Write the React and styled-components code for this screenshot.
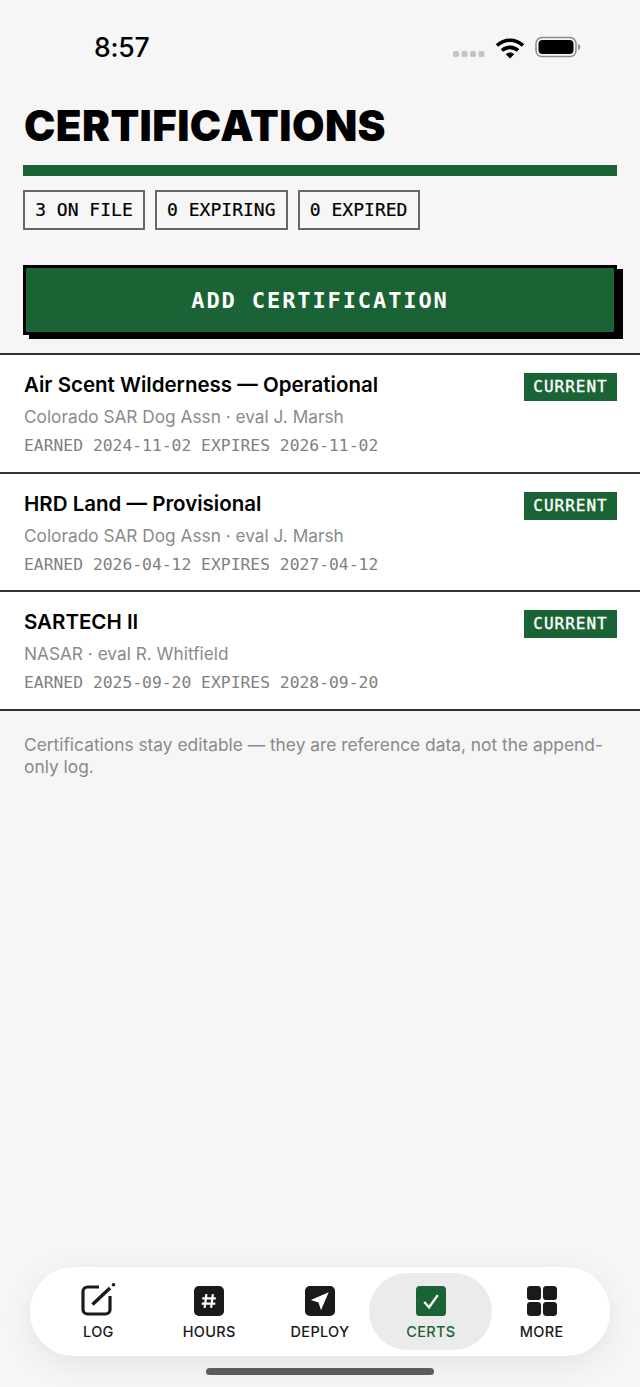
import React from 'react';
import styled, { createGlobalStyle } from 'styled-components';

const GlobalStyle = createGlobalStyle`
  html, body {
    margin: 0;
    padding: 0;
    background: #f6f6f6;
  }
  * {
    box-sizing: border-box;
  }
`;

const GREEN = '#1a6334';
const MONO = `'DejaVu Sans Mono', 'Liberation Mono', monospace`;
const SANS = `Inter, 'Liberation Sans', sans-serif`;

const Page = styled.div`
  position: relative;
  width: 640px;
  height: 1387px;
  overflow: hidden;
  background: #f6f6f6;
  font-family: ${SANS};
  color: #000;
`;

const StatusBar = styled.div`
  height: 94px;
  padding: 30px 59px 0 94px;
  display: flex;
  justify-content: space-between;
`;

const Clock = styled.div`
  font-size: 26.5px;
  line-height: 34px;
  font-weight: 500;
  letter-spacing: -0.2px;
`;

const StatusIcons = styled.div`
  display: flex;
  align-items: flex-start;
  gap: 10px;
  padding-top: 6px;
`;

const Header = styled.header`
  padding: 0 23px;
`;

const Title = styled.h1`
  margin: 0;
  height: 71px;
  padding-left: 1px;
  font-size: 42px;
  line-height: 64px;
  font-weight: 900;
  letter-spacing: 0.4px;
`;

const Rule = styled.div`
  height: 11px;
  background: ${GREEN};
`;

const Chips = styled.div`
  display: flex;
  gap: 10px;
  margin-top: 14px;
`;

const Chip = styled.div`
  height: 40px;
  padding: 0 10.2px 2px;
  display: flex;
  align-items: center;
  border: 2px solid #666;
  font-family: ${MONO};
  font-size: 18px;
  -webkit-text-stroke: 0.2px #000;
  white-space: pre;
`;

const AddButton = styled.button`
  display: block;
  width: 594px;
  height: 70px;
  margin: 35px 0 18px;
  border: 3px solid #000;
  box-shadow: 6px 4px 0 #000;
  background: ${GREEN};
  color: #fff;
  font-family: ${MONO};
  font-size: 22px;
  font-weight: 700;
  letter-spacing: 1.9px;
`;

const List = styled.div`
  display: flex;
  flex-direction: column;
  border-top: 2px solid #333;
`;

const Row = styled.div`
  height: 118.6px;
  padding: 16px 23px 0 24px;
  display: flex;
  justify-content: space-between;
  align-items: flex-start;
  background: #fff;
  border-bottom: 2px solid #333;
`;

const RowText = styled.div`
  display: flex;
  flex-direction: column;
`;

const RowTitle = styled.div`
  font-size: 20.5px;
  line-height: 28px;
  font-weight: 600;
`;

const RowSub = styled.div`
  margin-top: 5px;
  font-size: 17.25px;
  line-height: 26px;
  color: #8a8a8a;
`;

const RowMeta = styled.div`
  margin-top: 4px;
  font-family: ${MONO};
  font-size: 16.35px;
  line-height: 24px;
  color: #808080;
`;

const Badge = styled.div`
  width: 93px;
  height: 28px;
  margin-top: 2px;
  padding-bottom: 1px;
  display: flex;
  align-items: center;
  justify-content: center;
  background: ${GREEN};
  color: #fff;
  font-family: ${MONO};
  font-size: 16px;
  letter-spacing: 1px;
  -webkit-text-stroke: 0.35px #fff;
`;

const Note = styled.p`
  margin: 23px 0 0;
  padding: 0 24px;
  font-size: 17.35px;
  line-height: 22px;
  color: #8a8a8a;
`;

const TabBar = styled.nav`
  position: absolute;
  left: 30px;
  top: 1267px;
  width: 580px;
  height: 89px;
  padding: 6px 13px;
  display: grid;
  grid-template-columns: repeat(5, 1fr);
  background: #fff;
  border-radius: 44px;
  box-shadow: 0 8px 32px rgba(0, 0, 0, 0.08);
`;

const Tab = styled.div`
  display: flex;
  flex-direction: column;
  align-items: center;
  padding-top: 13px;
  margin: 0 -6px;
  border-radius: 40px;
  background: ${(p) => (p.$active ? '#ebebeb' : 'transparent')};
  color: ${(p) => (p.$active ? GREEN : '#1a1a1a')};
`;

const TabLabel = styled.span`
  margin-top: 7px;
  font-size: 14.5px;
  line-height: 18px;
  font-weight: 450;
  letter-spacing: 0.3px;
`;

// the pencil pokes out above the row of square icons
const LogSvg = styled.svg`
  margin-top: -3px;
`;

const HomeIndicator = styled.div`
  position: absolute;
  left: 206px;
  top: 1368px;
  width: 228px;
  height: 7px;
  border-radius: 4px;
  background: #5c5c5c;
`;

const certs = [
  {
    name: 'Air Scent Wilderness — Operational',
    org: 'Colorado SAR Dog Assn · eval J. Marsh',
    dates: 'EARNED 2024-11-02 EXPIRES 2026-11-02',
  },
  {
    name: 'HRD Land — Provisional',
    org: 'Colorado SAR Dog Assn · eval J. Marsh',
    dates: 'EARNED 2026-04-12 EXPIRES 2027-04-12',
  },
  {
    name: 'SARTECH II',
    org: 'NASAR · eval R. Whitfield',
    dates: 'EARNED 2025-09-20 EXPIRES 2028-09-20',
  },
];

function SignalDots() {
  return (
    <svg width="34" height="24" viewBox="0 0 34 24" fill="#c4c4c4">
      <rect x="2" y="15" width="6" height="6" rx="1.500" />
      <rect x="10.500" y="15" width="6" height="6" rx="1.500" />
      <rect x="19" y="15" width="6" height="6" rx="1.500" />
      <rect x="27.500" y="15" width="6" height="6" rx="1.500" />
    </svg>
  );
}

function WifiIcon() {
  return (
    <svg width="30" height="24" viewBox="0 0 30 24" fill="none" stroke="#000" strokeWidth="3.6">
      <path d="M2 9.500C9.500 2.500 20.500 2.500 28 9.500" />
      <path d="M7 14.500C11.500 10.300 18.500 10.300 23 14.500" />
      <path d="M15 22.500L10.800 18.200C13 16 17 16 19.200 18.200Z" fill="#000" stroke="none" />
    </svg>
  );
}

function BatteryIcon() {
  return (
    <svg width="46" height="22" viewBox="0 0 46 22">
      <rect x="1" y="1.500" width="40" height="19" rx="6" fill="none" stroke="#8a8a8a" strokeWidth="1.500" />
      <rect x="3.500" y="4" width="35" height="14" rx="4" fill="#000" />
      <path d="M43 8v6c1.500-.5 2.200-1.700 2.200-3S44.500 8.500 43 8z" fill="#8a8a8a" />
    </svg>
  );
}

function LogIcon() {
  return (
    <LogSvg width="36" height="33" viewBox="0 0 36 33" fill="none" stroke="currentColor">
      <path d="M19 4H7.500A4.500 4.500 0 0 0 3 8.500V26.500A4.500 4.500 0 0 0 7.500 31H25.500A4.500 4.500 0 0 0 30 26.500V13" strokeWidth="3.200" />
      <path d="M12.500 21.500L30 5" strokeWidth="3.400" />
      <circle cx="33.500" cy="1.800" r="1.800" fill="currentColor" stroke="none" />
    </LogSvg>
  );
}

function HoursIcon() {
  return (
    <svg width="30" height="30" viewBox="0 0 31 31">
      <rect width="31" height="31" rx="5" fill="currentColor" />
      <path d="M12.800 8.500L11 22.500M19.500 8.500L17.700 22.500M8.500 12.800H22.500M8 18.200H22" stroke="#fff" strokeWidth="2.300" fill="none" />
    </svg>
  );
}

function DeployIcon() {
  return (
    <svg width="30" height="30" viewBox="0 0 31 31">
      <rect width="31" height="31" rx="5" fill="currentColor" />
      <path d="M24.500 6.500L6 14.500L14 17L16.500 25Z" fill="#fff" />
    </svg>
  );
}

function CertsIcon() {
  return (
    <svg width="30" height="30" viewBox="0 0 31 31">
      <rect width="31" height="31" rx="4" fill={GREEN} />
      <path d="M8.500 16.500L13.500 22L22.500 9.500" stroke="#fff" strokeWidth="2.400" fill="none" />
    </svg>
  );
}

function MoreIcon() {
  return (
    <svg width="30" height="30" viewBox="0 0 31 31" fill="currentColor">
      <rect width="14.500" height="14.500" rx="3.500" />
      <rect x="16.500" width="14.500" height="14.500" rx="3.500" />
      <rect y="16.500" width="14.500" height="14.500" rx="3.500" />
      <rect x="16.500" y="16.500" width="14.500" height="14.500" rx="3.500" />
    </svg>
  );
}

const tabs = [
  { label: 'LOG', Icon: LogIcon },
  { label: 'HOURS', Icon: HoursIcon },
  { label: 'DEPLOY', Icon: DeployIcon },
  { label: 'CERTS', Icon: CertsIcon, active: true },
  { label: 'MORE', Icon: MoreIcon },
];

function App() {
  return (
    <Page>
      <GlobalStyle />
      <StatusBar>
        <Clock>8:57</Clock>
        <StatusIcons>
          <SignalDots />
          <WifiIcon />
          <BatteryIcon />
        </StatusIcons>
      </StatusBar>
      <Header>
        <Title>CERTIFICATIONS</Title>
        <Rule />
        <Chips>
          <Chip>3 ON FILE</Chip>
          <Chip>0 EXPIRING</Chip>
          <Chip>0 EXPIRED</Chip>
        </Chips>
        <AddButton>ADD CERTIFICATION</AddButton>
      </Header>
      <List>
        {certs.map((c) => (
          <Row key={c.name}>
            <RowText>
              <RowTitle>{c.name}</RowTitle>
              <RowSub>{c.org}</RowSub>
              <RowMeta>{c.dates}</RowMeta>
            </RowText>
            <Badge>CURRENT</Badge>
          </Row>
        ))}
      </List>
      <Note>Certifications stay editable — they are reference data, not the append-only log.</Note>
      <TabBar>
        {tabs.map(({ label, Icon, active }) => (
          <Tab key={label} $active={active}>
            <Icon />
            <TabLabel>{label}</TabLabel>
          </Tab>
        ))}
      </TabBar>
      <HomeIndicator />
    </Page>
  );
}

export default App;
